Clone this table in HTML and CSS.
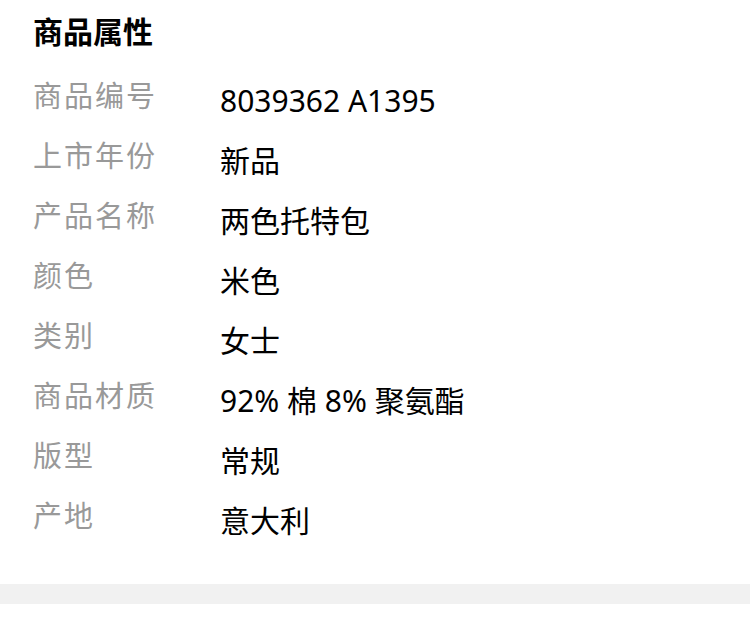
FILE: index.html
```html
<!DOCTYPE html>
<html lang="zh-CN">
<head>
<meta charset="utf-8">
<link rel="stylesheet" href="styles.css">
</head>
<body>
<div class="attrs">
  <h2 class="attrs-title">商品属性</h2>
  <dl class="attrs-list">
    <div class="row"><dt>商品编号</dt><dd>8039362 A1395</dd></div>
    <div class="row"><dt>上市年份</dt><dd>新品</dd></div>
    <div class="row"><dt>产品名称</dt><dd>两色托特包</dd></div>
    <div class="row"><dt>颜色</dt><dd>米色</dd></div>
    <div class="row"><dt>类别</dt><dd>女士</dd></div>
    <div class="row"><dt>商品材质</dt><dd>92% 棉 8% 聚氨酯</dd></div>
    <div class="row"><dt>版型</dt><dd>常规</dd></div>
    <div class="row"><dt>产地</dt><dd>意大利</dd></div>
  </dl>
</div>
<div class="divider"></div>
</body>
</html>
```
FILE: styles.css
```css
html, body {
  margin: 0;
  padding: 0;
  background: #fff;
}
body {
  font-family: "Noto Sans", "Noto Sans CJK SC", sans-serif;
  width: 750px;
}
.attrs {
  padding: 10px 0 0 33px;
  height: 584px;
  box-sizing: border-box;
}
.attrs-title {
  margin: 0;
  font-family: "Noto Sans CJK SC", sans-serif;
  font-weight: 700;
  font-size: 30px;
  line-height: 40px;
  color: #000;
}
.attrs-list {
  margin: 24px 0 0;
  padding: 0;
}
.row {
  display: flex;
  align-items: flex-start;
  height: 60px;
}
.row dt {
  width: 187px;
  font-family: "Noto Sans CJK SC", sans-serif;
  font-size: 29px;
  line-height: 40px;
  letter-spacing: 2px;
  color: #999;
}
.row dd {
  margin: 0;
  padding-top: 7px;
  font-size: 30px;
  line-height: 40px;
  color: #000;
}
.divider {
  height: 20px;
  background: #f1f1f1;
}
```
